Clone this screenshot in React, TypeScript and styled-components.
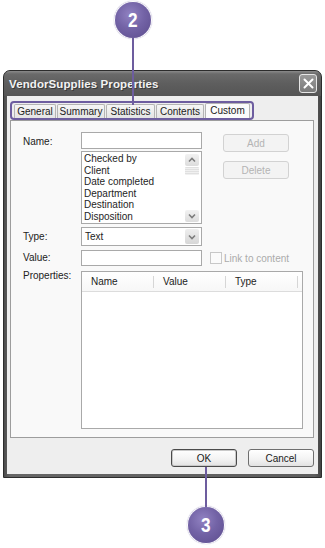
import React from 'react';
import styled, { createGlobalStyle } from 'styled-components';

const GlobalStyle = createGlobalStyle`
  html, body {
    margin: 0;
    padding: 0;
    background: #ffffff;
  }
  body {
    font-family: "Liberation Sans", Arial, sans-serif;
    font-size: 10px;
    color: #222;
  }
`;

const PURPLE = '#6d5d9f';

const Page = styled.div`
  width: 325px;
  height: 548px;
  overflow: hidden;
`;

const Callout = styled.div<{ $left: number; $top: number }>`
  position: relative;
  z-index: 2;
  margin-left: ${p => p.$left}px;
  margin-top: ${p => p.$top}px;
  width: 36px;
  height: 36px;
`;

const Badge = styled.div`
  width: 36px;
  height: 36px;
  border-radius: 50%;
  background: radial-gradient(circle at 42% 35%, #9182c2 0%, #7363a6 45%, #5b4b8c 100%);
  box-shadow: 0 0 0 1px #ffffff, 0 0 1px 1px #8f84b5;
  color: #fff;
  display: flex;
  align-items: center;
  justify-content: center;
  font-family: "Liberation Sans", Arial, sans-serif;
  font-weight: bold;
  font-size: 21px;
`;

const Digit = styled.span`
  display: inline-block;
  transform: scaleX(0.82);
`;

const Stem = styled.div<{ $dir: 'up' | 'down'; $len: number }>`
  position: absolute;
  left: 17px;
  width: 2px;
  height: ${p => p.$len}px;
  background: ${PURPLE};
  ${p => (p.$dir === 'down' ? 'top: 36px;' : 'bottom: 36px;')}
`;

const TopArea = styled.div`
  height: 70px;
  padding-top: 2px;
  box-sizing: border-box;
`;

const Dialog = styled.div`
  margin-left: 3px;
  width: 319px;
  height: 408px;
  box-sizing: border-box;
  border: 1px solid #2c2c2c;
  border-radius: 7px 7px 0 0;
  background: linear-gradient(90deg, #4c4c4c, #666 2%, #5e5e5e 98%, #444);
  padding: 0 3px 3px;
  display: flex;
  flex-direction: column;
`;

const TitleBar = styled.div`
  height: 26px;
  display: flex;
  align-items: center;
  justify-content: space-between;
  margin: 0 -3px;
  padding: 0 4px 0 5px;
  border-radius: 6px 6px 0 0;
  background: linear-gradient(#8a8a8a 0%, #6a6a6a 12%, #5e5e5e 50%, #555 100%);
`;

const Title = styled.span`
  color: #f2f2f2;
  font-weight: bold;
  font-size: 11.5px;
  text-shadow: 1px 1px 0 #3a3a3a;
  letter-spacing: 0.1px;
`;

const CloseButton = styled.div`
  width: 16px;
  height: 17px;
  border: 1px solid #e6e6e6;
  border-radius: 3px;
  background: linear-gradient(#9a9a9a, #7a7a7a);
  display: flex;
  align-items: center;
  justify-content: center;
`;

const Body = styled.div`
  flex: 1;
  background: #eeeeee;
  padding: 5px 4px 7px 3px;
  display: flex;
  flex-direction: column;
`;

const TabStrip = styled.div`
  width: 244px;
  height: 19px;
  box-sizing: border-box;
  border: 2px solid ${PURPLE};
  border-radius: 4px;
  padding: 0 0 0 2px;
  display: flex;
  align-items: flex-end;
  gap: 1px;
  position: relative;
  z-index: 1;
`;

const Tab = styled.div<{ $w: number; $active?: boolean }>`
  width: ${p => p.$w}px;
  height: ${p => (p.$active ? 15 : 14)}px;
  box-sizing: border-box;
  border: 1px solid #b4b4b4;
  border-bottom: none;
  border-radius: 2px 2px 0 0;
  background: ${p => (p.$active ? '#fbfbfb' : 'linear-gradient(#f6f6f6, #e4e4e4)')};
  display: flex;
  align-items: center;
  justify-content: center;
  font-size: 10px;
  color: #222;
  padding-bottom: ${p => (p.$active ? 2 : 0)}px;
`;

const Panel = styled.div`
  width: 304px;
  height: 318px;
  box-sizing: border-box;
  border: 1px solid #9d9d9d;
  background: #f9f9f9;
  padding: 11px 0 0 12px;
  display: flex;
  flex-direction: column;
`;

const TopSection = styled.div`
  display: flex;
  align-items: flex-start;
`;

const Label = styled.div`
  width: 58px;
  flex: none;
  font-size: 10px;
  line-height: 12px;
  color: #222;
`;

const NameLabel = styled(Label)`
  padding-top: 4px;
`;

const NameColumn = styled.div`
  width: 121px;
  display: flex;
  flex-direction: column;
  gap: 2px;
`;

const TextBox = styled.div<{ $h: number }>`
  width: 121px;
  height: ${p => p.$h}px;
  box-sizing: border-box;
  border: 1px solid #a9a9a9;
  background: #fff;
`;

const ListBox = styled.div`
  height: 73px;
  box-sizing: border-box;
  border: 1px solid #a9a9a9;
  background: #fff;
  display: flex;
`;

const Items = styled.div`
  flex: 1;
  padding: 1px 0 0 2px;
`;

const Item = styled.div`
  font-size: 10px;
  line-height: 11.6px;
  color: #1e1e1e;
`;

const ScrollBar = styled.div`
  width: 14px;
  margin-right: 2px;
  padding: 2px 0 1px;
  display: flex;
  flex-direction: column;
`;

const ScrollBtn = styled.div`
  height: 12px;
  border-radius: 2px;
  background: linear-gradient(#f2f2f2, #dcdcdc);
  display: flex;
  align-items: center;
  justify-content: center;
`;

const Thumb = styled.div`
  height: 8px;
  margin-top: 1px;
  border-radius: 1px;
  background: repeating-linear-gradient(#e0e0e0 0 1px, #f0f0f0 1px 2px);
`;

const ScrollTrack = styled.div`
  flex: 1;
`;

const ButtonColumn = styled.div`
  margin-left: 21px;
  padding-top: 2px;
  display: flex;
  flex-direction: column;
  gap: 9px;
`;

const PushButton = styled.div<{ $disabled?: boolean; $default?: boolean }>`
  width: 66px;
  height: 18px;
  box-sizing: border-box;
  border: 1px solid ${p => (p.$disabled ? '#d2d2d2' : p.$default ? '#4a4a4a' : '#6e6e6e')};
  border-radius: 3px;
  background: ${p => (p.$disabled ? '#f3f3f3' : 'linear-gradient(#ffffff, #f2f2f2 60%, #e2e2e2)')};
  box-shadow: ${p => (p.$default ? 'inset 0 0 0 1px #c9c9c9' : 'none')};
  color: ${p => (p.$disabled ? '#b4b4b4' : '#1a1a1a')};
  font-size: 10px;
  display: flex;
  align-items: center;
  justify-content: center;
`;

const FieldRow = styled.div<{ $mt: number }>`
  display: flex;
  align-items: center;
  margin-top: ${p => p.$mt}px;
`;

const Select = styled.div`
  width: 121px;
  height: 19px;
  box-sizing: border-box;
  border: 1px solid #a9a9a9;
  background: #fff;
  display: flex;
  align-items: center;
  padding: 0 2px 0 3px;
  font-size: 10px;
`;

const SelectText = styled.span`
  flex: 1;
`;

const DropBtn = styled.div`
  width: 14px;
  height: 15px;
  border-radius: 2px;
  background: linear-gradient(#eeeeee, #d6d6d6);
  display: flex;
  align-items: center;
  justify-content: center;
`;

const CheckBox = styled.div`
  width: 12px;
  height: 12px;
  box-sizing: border-box;
  margin-left: 8px;
  border: 1px solid #c8c8c8;
  background: #fbfbfb;
`;

const CheckLabel = styled.span`
  margin-left: 2px;
  font-size: 10px;
  color: #ababab;
`;

const PropsRow = styled.div`
  display: flex;
  align-items: flex-start;
  margin-top: 5px;
`;

const PropsLabel = styled(Label)`
  margin-top: -1px;
`;

const ListView = styled.div`
  width: 222px;
  height: 158px;
  box-sizing: border-box;
  border: 1px solid #a9a9a9;
  background: #fff;
`;

const Header = styled.div`
  height: 19px;
  display: flex;
  border-bottom: 1px solid #dcdcdc;
  background: linear-gradient(#ffffff, #f7f7f7);
`;

const HeaderCell = styled.div`
  width: 72px;
  box-sizing: border-box;
  padding-left: 9px;
  display: flex;
  align-items: center;
  font-size: 10px;
  position: relative;
  &::after {
    content: '';
    position: absolute;
    right: 0;
    top: 4px;
    bottom: 3px;
    width: 1px;
    background: #d6d6d6;
  }
`;

const ButtonRow = styled.div`
  margin-top: 11px;
  display: flex;
  justify-content: flex-end;
  gap: 11px;
`;

const BottomArea = styled.div`
  padding-top: 29px;
`;

const Chevron = ({ up }: { up?: boolean }) => (
  <svg width="8" height="6" viewBox="0 0 8 6">
    <path
      d={up ? 'M1 4.5 L4 1.5 L7 4.5' : 'M1 1.5 L4 4.5 L7 1.5'}
      fill="none"
      stroke="#7d7d7d"
      strokeWidth="1.6"
    />
  </svg>
);

const CloseX = () => (
  <svg width="11" height="11" viewBox="0 0 11 11">
    <path d="M1.5 1.5 L9.5 9.5 M9.5 1.5 L1.5 9.5" stroke="#ffffff" strokeWidth="2" strokeLinecap="round" />
  </svg>
);

const propNames = ['Checked by', 'Client', 'Date completed', 'Department', 'Destination', 'Disposition'];

const tabs = [
  { name: 'General', w: 42 },
  { name: 'Summary', w: 48 },
  { name: 'Statistics', w: 49 },
  { name: 'Contents', w: 48 },
  { name: 'Custom', w: 45, active: true },
];

export default function App() {
  return (
    <Page>
      <GlobalStyle />
      <TopArea>
        <Callout $left={115} $top={0}>
          <Badge><Digit>2</Digit></Badge>
          <Stem $dir="down" $len={67} />
        </Callout>
      </TopArea>

      <Dialog>
        <TitleBar>
          <Title>VendorSupplies Properties</Title>
          <CloseButton><CloseX /></CloseButton>
        </TitleBar>
        <Body>
          <TabStrip>
            {tabs.map(t => (
              <Tab key={t.name} $w={t.w} $active={t.active}>{t.name}</Tab>
            ))}
          </TabStrip>
          <Panel>
            <TopSection>
              <NameLabel>Name:</NameLabel>
              <NameColumn>
                <TextBox $h={17} />
                <ListBox>
                  <Items>
                    {propNames.map(n => <Item key={n}>{n}</Item>)}
                  </Items>
                  <ScrollBar>
                    <ScrollBtn><Chevron up /></ScrollBtn>
                    <Thumb />
                    <ScrollTrack />
                    <ScrollBtn><Chevron /></ScrollBtn>
                  </ScrollBar>
                </ListBox>
              </NameColumn>
              <ButtonColumn>
                <PushButton $disabled>Add</PushButton>
                <PushButton $disabled>Delete</PushButton>
              </ButtonColumn>
            </TopSection>

            <FieldRow $mt={3}>
              <Label>Type:</Label>
              <Select>
                <SelectText>Text</SelectText>
                <DropBtn><Chevron /></DropBtn>
              </Select>
            </FieldRow>

            <FieldRow $mt={4}>
              <Label>Value:</Label>
              <TextBox $h={16} />
              <CheckBox />
              <CheckLabel>Link to content</CheckLabel>
            </FieldRow>

            <PropsRow>
              <PropsLabel>Properties:</PropsLabel>
              <ListView>
                <Header>
                  <HeaderCell>Name</HeaderCell>
                  <HeaderCell>Value</HeaderCell>
                  <HeaderCell>Type</HeaderCell>
                </Header>
              </ListView>
            </PropsRow>
          </Panel>
          <ButtonRow>
            <PushButton $default>OK</PushButton>
            <PushButton>Cancel</PushButton>
          </ButtonRow>
        </Body>
      </Dialog>

      <BottomArea>
        <Callout $left={188} $top={0}>
          <Stem $dir="up" $len={40} />
          <Badge><Digit>3</Digit></Badge>
        </Callout>
      </BottomArea>
    </Page>
  );
}
